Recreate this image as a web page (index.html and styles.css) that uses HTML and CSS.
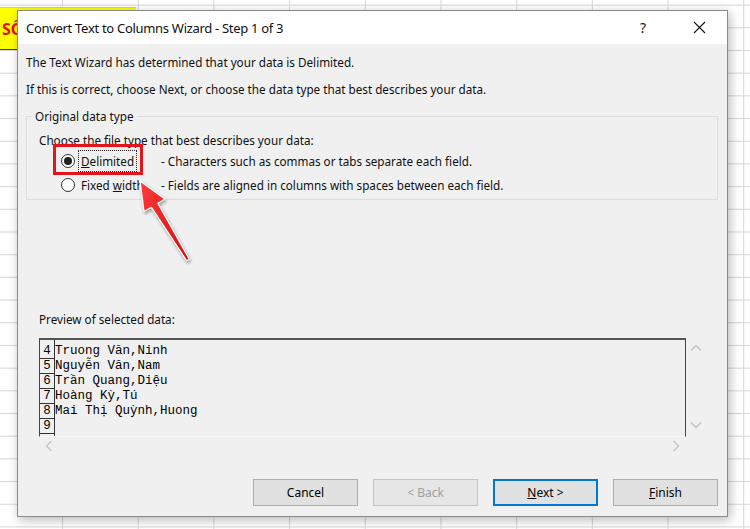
FILE: index.html
```html
<!DOCTYPE html>
<html lang="vi">
<head>
    <meta charset="UTF-8">
    <meta name="viewport" content="width=device-width, initial-scale=1.0">
    <title>Convert Text to Columns Wizard</title>
    <link rel="stylesheet" href="styles.css">
</head>
<body>
    <div class="sheet">
        <div class="cell-title">SỐ LIỆU</div>

        <!-- hộp thoại tách cột -->
        <div class="dialog">
            <div class="titlebar">
                <span class="title">Convert Text to Columns Wizard - Step 1 of 3</span>
                <span class="caption-btn help">?</span>
                <span class="caption-btn">
                    <svg width="13" height="13" viewBox="0 0 13 13"><path d="M1 1 L12 12 M12 1 L1 12" stroke="#111" stroke-width="1.1" fill="none"/></svg>
                </span>
            </div>

            <div class="body">
                <p class="line first">The Text Wizard has determined that your data is Delimited.</p>
                <p class="line">If this is correct, choose Next, or choose the data type that best describes your data.</p>

                <fieldset class="group">
                    <legend>Original data type</legend>
                    <p class="hint">Choose the file type that best describes your data:</p>
                    <div class="option">
                        <span class="radio checked"></span>
                        <span class="opt-label"><span class="focus"><u>D</u>elimited</span></span>
                        <span class="opt-desc">- Characters such as commas or tabs separate each field.</span>
                    </div>
                    <div class="option">
                        <span class="radio"></span>
                        <span class="opt-label">Fixed <u>w</u>idth</span>
                        <span class="opt-desc">- Fields are aligned in columns with spaces between each field.</span>
                    </div>
                </fieldset>

                <p class="preview-label">Preview of selected data:</p>
                <div class="preview">
                    <div class="preview-main">
                        <div class="preview-box">
                            <div class="nums">
                                <span>4</span><span>5</span><span>6</span><span>7</span><span>8</span><span>9</span>
                            </div>
                            <div class="rows">
                                <div>Truong Văn,Ninh</div>
                                <div>Nguyễn Văn,Nam</div>
                                <div>Trần Quang,Diệu</div>
                                <div>Hoàng Kỳ,Tú</div>
                                <div>Mai Thị Quỳnh,Huong</div>
                            </div>
                        </div>
                        <div class="vscroll">
                            <svg width="12" height="8" viewBox="0 0 12 8"><path d="M1 6.5 L6 1.5 L11 6.5" stroke="#c2c2c2" stroke-width="1.3" fill="none"/></svg>
                            <svg width="12" height="8" viewBox="0 0 12 8"><path d="M1 1.5 L6 6.5 L11 1.5" stroke="#c2c2c2" stroke-width="1.3" fill="none"/></svg>
                        </div>
                    </div>
                    <div class="hscroll">
                        <svg width="8" height="12" viewBox="0 0 8 12"><path d="M6.5 1 L1.5 6 L6.5 11" stroke="#c2c2c2" stroke-width="1.3" fill="none"/></svg>
                        <svg width="8" height="12" viewBox="0 0 8 12"><path d="M1.5 1 L6.5 6 L1.5 11" stroke="#c2c2c2" stroke-width="1.3" fill="none"/></svg>
                    </div>
                </div>

                <div class="buttons">
                    <button>Cancel</button>
                    <button class="disabled">&lt; Back</button>
                    <button class="default"><u>N</u>ext &gt;</button>
                    <button><u>F</u>inish</button>
                </div>
            </div>

            <!-- khung đỏ + mũi tên chú thích -->
            <div class="callout"></div>
            <svg class="arrow" width="70" height="100" viewBox="0 0 70 100">
                <defs>
                    <linearGradient id="arrowFill" x1="0" y1="0" x2="1" y2="1">
                        <stop offset="0" stop-color="#ff3b3b"/>
                        <stop offset="1" stop-color="#d40c0c"/>
                    </linearGradient>
                </defs>
                <polygon points="10,11 35,29 28,33.4 59.3,89.2 56.7,90.8 21.4,37.4 14,41.5"
                         fill="url(#arrowFill)" stroke="#fff" stroke-width="1.3" stroke-linejoin="round"/>
            </svg>
        </div>
    </div>
</body>
</html>
```

FILE: styles.css
```css
/* bảng tính phía sau */
body {
    margin: 0;
    font-family: 'Noto Sans', 'Liberation Sans', sans-serif;
    font-size: 11.7px;
    color: #111;
}

.sheet {
    position: relative;
    width: 750px;
    height: 529px;
    overflow: hidden;
    background-color: #fff;
    background-image:
        linear-gradient(to right, #d6d6d6 1px, transparent 1px),
        linear-gradient(to bottom, #d6d6d6 1px, transparent 1px);
    background-size: 75.7px 100%, 100% 22.7px;
    background-position: 62px 0, 0 50px;
}

.cell-title {
    margin-top: 7px;
    width: 136px;
    height: 43px;
    box-sizing: border-box;
    border-top: 1px solid #c8c8c8;
    border-bottom: 1px solid #444;
    background: #ffff00;
    padding-left: 2px;
    color: #e3101b;
    font-weight: bold;
    font-size: 16px;
    line-height: 42px;
    white-space: nowrap;
}

/* hộp thoại */
.dialog {
    position: absolute;
    left: 17px;
    top: 10px;
    width: 711px;
    height: 507px;
    box-sizing: border-box;
    border: 1px solid #8a8a8a;
    background: #f0f0f0;
    box-shadow: 2px 3px 10px rgba(0, 0, 0, 0.28);
    display: flex;
    flex-direction: column;
}

.titlebar {
    height: 33px;
    background: #fff;
    display: flex;
    align-items: center;
    padding-left: 8px;
    padding-right: 5px;
}

.title {
    flex: 1;
    font-size: 13px;
    letter-spacing: -0.3px;
    color: #111;
}

.caption-btn {
    width: 46px;
    height: 33px;
    display: flex;
    align-items: center;
    justify-content: center;
    font-size: 14px;
    color: #222;
}

.caption-btn.help {
    margin-right: 10px;
}

.body {
    flex: 1;
    padding: 0 9px 0 8px;
    display: flex;
    flex-direction: column;
}

.line {
    margin: 11px 0 0;
    line-height: 16px;
}

.line.first {
    margin-top: 10px;
}

/* nhóm Original data type */
.group {
    margin: 11px 0 0;
    padding: 0 0 2px 12px;
    border: 1px solid #dcdcdc;
}

.group legend {
    padding: 0 3px;
    margin-left: -7px;
    line-height: 16px;
}

.hint {
    margin: 8px 0 1px;
    line-height: 16px;
}

.option {
    height: 24px;
    display: flex;
    align-items: center;
    padding-left: 22px;
}

.radio {
    width: 14px;
    height: 14px;
    box-sizing: border-box;
    border: 1px solid #333;
    border-radius: 50%;
    background: #fff;
    display: flex;
    align-items: center;
    justify-content: center;
    margin-right: 6px;
}

.radio.checked::after {
    content: "";
    width: 8px;
    height: 8px;
    border-radius: 50%;
    background: #222;
}

.opt-label {
    width: 80px;
    line-height: 16px;
}

.focus {
    outline: 1px dotted #222;
    outline-offset: 2px;
}

.opt-desc {
    line-height: 16px;
}

/* xem trước dữ liệu */
.preview-label {
    margin: 111px 0 11px 13px;
    line-height: 16px;
}

.preview {
    margin-left: 13px;
    width: 667px;
}

.preview-main {
    display: flex;
}

.preview-box {
    width: 647px;
    height: 99px;
    box-sizing: border-box;
    border-top: 2px solid #555;
    border-left: 1px solid #444;
    border-right: 1px solid #444;
    border-bottom: 1px solid #fafafa;
    display: flex;
    padding-top: 4px;
    font-family: 'Liberation Mono', monospace;
    font-size: 12.5px;
    color: #000;
}

.nums {
    width: 14px;
    border-right: 1px solid #333;
    margin-top: -4px;
    padding-top: 4px;
    display: flex;
    flex-direction: column;
}

.nums span {
    height: 15px;
    line-height: 15px;
    box-sizing: border-box;
    border-bottom: 1px solid #333;
    text-align: center;
}

.rows div {
    height: 15px;
    line-height: 15px;
    white-space: pre;
}

.vscroll {
    width: 20px;
    display: flex;
    flex-direction: column;
    justify-content: space-between;
    align-items: center;
    padding: 6px 0 8px;
    box-sizing: border-box;
    height: 99px;
}

.hscroll {
    width: 647px;
    height: 18px;
    display: flex;
    justify-content: space-between;
    align-items: center;
    padding: 0 6px;
    box-sizing: border-box;
}

/* nút bấm */
.buttons {
    margin-top: 24px;
    display: flex;
    justify-content: flex-end;
    gap: 15px;
}

.buttons button {
    width: 105px;
    height: 27px;
    box-sizing: border-box;
    background: #e1e1e1;
    border: 1px solid #adadad;
    border-radius: 0;
    font-family: inherit;
    font-size: 12px;
    color: #000;
    padding: 0;
}

.buttons button.disabled {
    color: #a0a0a0;
    border-color: #c4c4c4;
    background: #e6e6e6;
}

.buttons button.default {
    border: 2px solid #0078d7;
}

.callout {
    position: absolute;
    left: 35px;
    top: 133px;
    width: 90px;
    height: 31px;
    box-sizing: border-box;
    border: 3px solid #e3151a;
}

.arrow {
    position: absolute;
    left: 112px;
    top: 159px;
    filter: drop-shadow(1px 2px 1.5px rgba(0, 0, 0, 0.35));
}
```
